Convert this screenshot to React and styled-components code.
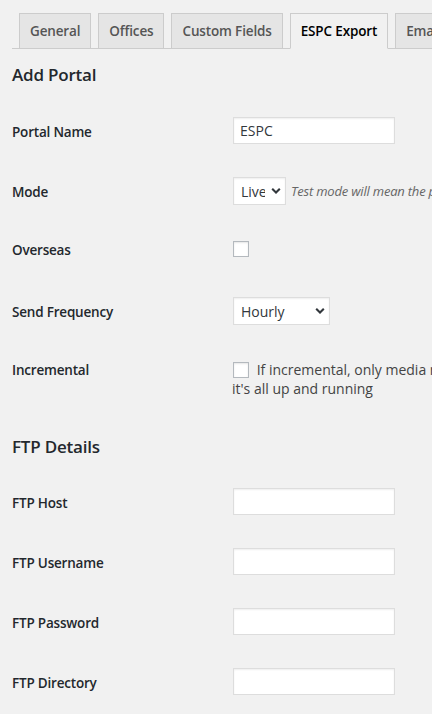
import React from "react";
import styled, { createGlobalStyle } from "styled-components";

const GlobalStyle = createGlobalStyle`
  html, body {
    margin: 0;
    padding: 0;
    background: #f1f1f1;
    overflow: hidden;
  }
  body {
    font-family: "Open Sans", "Noto Sans", "Liberation Sans", sans-serif;
    font-size: 13px;
    color: #444;
  }
`;

const Wrap = styled.div`
  padding-left: 12px;
  width: 900px;
`;

const TabBar = styled.nav`
  display: flex;
  align-items: flex-end;
  gap: 7px;
  padding: 13px 0 0 7px;
  border-bottom: 1px solid #ccc;
  white-space: nowrap;
`;

const Tab = styled.a`
  display: block;
  padding: 5px 10px;
  border: 1px solid #ccc;
  border-bottom: ${(p) => (p.$active ? "1px solid #f1f1f1" : "none")};
  margin-bottom: ${(p) => (p.$active ? "-1px" : "0")};
  background: ${(p) => (p.$active ? "#f1f1f1" : "#e5e5e5")};
  color: ${(p) => (p.$active ? "#000" : "#555")};
  font-size: 13.5px;
  letter-spacing: -0.15px;
  font-weight: 600;
  line-height: 24px;
  text-decoration: none;
`;

const SectionTitle = styled.h2`
  margin: ${(p) => p.$top}px 0 ${(p) => p.$bottom}px;
  font-size: 17px;
  letter-spacing: -0.2px;
  font-weight: 600;
  line-height: 22px;
  color: #23282d;
`;

const FormTable = styled.div`
  display: flex;
  flex-direction: column;
`;

const Row = styled.div`
  display: flex;
  align-items: flex-start;
  height: ${(p) => p.$h}px;
`;

const Label = styled.div`
  flex: none;
  width: 220px;
  padding-top: 21px;
  font-size: 13.5px;
  letter-spacing: -0.2px;
  font-weight: 600;
  line-height: 18px;
  color: #23282d;
`;

const Cell = styled.div`
  padding-top: ${(p) => p.$top}px;
  font-size: 14px;
  line-height: 18px;
  color: #444;
  white-space: nowrap;
`;

const Inline = styled.div`
  display: flex;
  align-items: center;
  gap: 5px;
`;

const TextInput = styled.input`
  display: block;
  box-sizing: border-box;
  width: 162px;
  height: 27px;
  margin: 0 0 0 1px;
  padding: 0 6px;
  border: 1px solid #ddd;
  background: #fff;
  box-shadow: inset 0 1px 2px rgba(0, 0, 0, 0.07);
  font-family: inherit;
  font-size: 14px;
  color: #32373c;
  outline: none;
`;

const SelectWrap = styled.span`
  position: relative;
  display: inline-block;
  vertical-align: top;
  margin-left: 1px;
`;

const Select = styled.select`
  appearance: none;
  -webkit-appearance: none;
  display: block;
  box-sizing: border-box;
  width: ${(p) => p.$w}px;
  height: 28px;
  margin: 0;
  padding: 0 20px 0 7px;
  border: 1px solid #ddd;
  border-radius: 0;
  background: #fff;
  box-shadow: inset 0 1px 2px rgba(0, 0, 0, 0.07);
  font-family: inherit;
  font-size: 14px;
  color: #32373c;
  outline: none;
`;

const Chevron = styled.svg`
  position: absolute;
  right: 5px;
  top: 50%;
  transform: translateY(-50%);
  pointer-events: none;
`;

const Checkbox = styled.input`
  appearance: none;
  -webkit-appearance: none;
  display: inline-block;
  box-sizing: border-box;
  width: 16px;
  height: 16px;
  margin: 0 4px 0 1px;
  vertical-align: -3px;
  border: 1px solid #b4b9be;
  background: #fff;
  box-shadow: inset 0 1px 2px rgba(0, 0, 0, 0.1);
`;

const CheckText = styled.span`
  display: inline-block;
  padding-top: 1px;
`;

const Description = styled.span`
  font-size: 13px;
  letter-spacing: -0.2px;
  font-style: italic;
  color: #666;
`;

function Dropdown({ width, value, options }) {
  return (
    <SelectWrap>
      <Select $w={width} defaultValue={value}>
        {options.map((o) => (
          <option key={o}>{o}</option>
        ))}
      </Select>
      <Chevron width="10" height="7" viewBox="0 0 10 7">
        <path d="M1.2 1.3 L5 5 L8.8 1.3" fill="none" stroke="#32373c" strokeWidth="2.1" />
      </Chevron>
    </SelectWrap>
  );
}

const tabs = ["General", "Offices", "Custom Fields", "ESPC Export", "Emails", "Advanced"];

export default function App() {
  return (
    <>
      <GlobalStyle />
      <Wrap>
        <TabBar>
          {tabs.map((t) => (
            <Tab key={t} href="#" $active={t === "ESPC Export"}>
              {t}
            </Tab>
          ))}
        </TabBar>

        <SectionTitle $top={15} $bottom={16}>Add Portal</SectionTitle>
        <FormTable>
          <Row $h={60}>
            <Label>Portal Name</Label>
            <Cell $top={15}>
              <TextInput type="text" defaultValue="ESPC" />
            </Cell>
          </Row>
          <Row $h={58}>
            <Label>Mode</Label>
            <Cell $top={15}>
              <Inline>
                <Dropdown width={53} value="Live" options={["Live", "Test"]} />
                <Description>
                  Test mode will mean the portal feed is only sent to the ESPC test server
                </Description>
              </Inline>
            </Cell>
          </Row>
          <Row $h={62}>
            <Label>Overseas</Label>
            <Cell $top={20}>
              <Checkbox type="checkbox" />
            </Cell>
          </Row>
          <Row $h={58}>
            <Label>Send Frequency</Label>
            <Cell $top={15}>
              <Dropdown width={97} value="Hourly" options={["Hourly", "Twice Daily", "Daily"]} />
            </Cell>
          </Row>
          <Row $h={58}>
            <Label>Incremental</Label>
            <Cell $top={20}>
              <Checkbox type="checkbox" />{" "}
              <CheckText>
                If incremental, only media not already exported will be sent. Only tick this once
              </CheckText>
              <br />
              <CheckText>it's all up and running</CheckText>
            </Cell>
          </Row>
        </FormTable>

        <SectionTitle $top={38} $bottom={15}>FTP Details</SectionTitle>
        <FormTable>
          {["FTP Host", "FTP Username", "FTP Password", "FTP Directory"].map((l) => (
            <Row key={l} $h={60}>
              <Label>{l}</Label>
              <Cell $top={15}>
                <TextInput type={l === "FTP Password" ? "password" : "text"} />
              </Cell>
            </Row>
          ))}
        </FormTable>
      </Wrap>
    </>
  );
}
